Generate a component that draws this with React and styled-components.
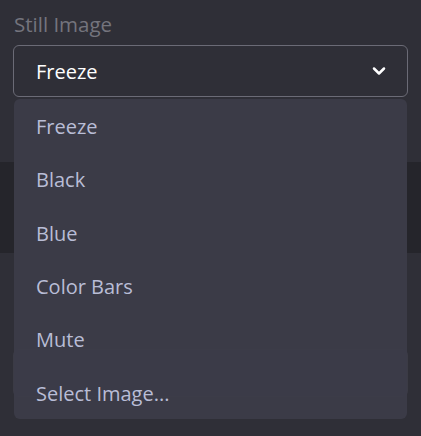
import React from "react";
import styled, { createGlobalStyle } from "styled-components";

const Global = createGlobalStyle`
  html, body { margin: 0; padding: 0; background: #2f2f37; }
  body { font-family: "Open Sans", "Noto Sans", sans-serif; -webkit-font-smoothing: antialiased; }
`;

const Page = styled.div`
  position: relative;
  width: 421px;
  height: 436px;
  overflow: hidden;
  background: #2f2f37;
`;

const Field = styled.div`
  padding: 12px 13px 0 13px;
  display: flex;
  flex-direction: column;
  gap: 8px;
`;

const Label = styled.div`
  color: #74747d;
  font-size: 20.5px;
  line-height: 25px;
  padding-left: 1px;
`;

const SelectBox = styled.div`
  height: 50px;
  border: 1px solid #6b6b76;
  border-radius: 6px;
  display: flex;
  align-items: center;
  justify-content: space-between;
  padding: 0 21px 0 22px;
  color: #ffffff;
  font-size: 20px;
`;

const Band = styled.div`
  margin-top: 65px;
  height: 91px;
  background: #25252b;
`;

const Ghost = styled.div`
  margin: 96px 13px 0 13px;
  height: 46px;
  border: 1px solid #3b3b45;
  border-radius: 6px;
  background: #33333c;
`;

const Menu = styled.ul`
  position: absolute;
  left: 14px;
  top: 99px;
  width: 393px;
  margin: 0;
  padding: 1px 0 0 0;
  list-style: none;
  background: rgba(60, 60, 72, 0.97);
  border-radius: 6px;
  height: 320px;
  box-sizing: border-box;
`;

const Item = styled.li`
  height: 53.3px;
  display: flex;
  align-items: center;
  padding-left: 22px;
  color: #b9bdd6;
  font-size: 20px;
`;

const Chevron = () => (
  <svg width="14" height="10" viewBox="0 0 14 10" fill="none">
    <path d="M2 2.5 L7 7.5 L12 2.5" stroke="#ffffff" strokeWidth="2.5" strokeLinecap="round" strokeLinejoin="round" />
  </svg>
);

const items = ["Freeze", "Black", "Blue", "Color Bars", "Mute", "Select Image..."];

export default function App() {
  return (
    <Page>
      <Global />
      <Field>
        <Label>Still Image</Label>
        <SelectBox>
          <span>Freeze</span>
          <Chevron />
        </SelectBox>
      </Field>
      <Band />
      <Ghost />
      <Menu>
        {items.map((t) => (
          <Item key={t}>{t}</Item>
        ))}
      </Menu>
    </Page>
  );
}
